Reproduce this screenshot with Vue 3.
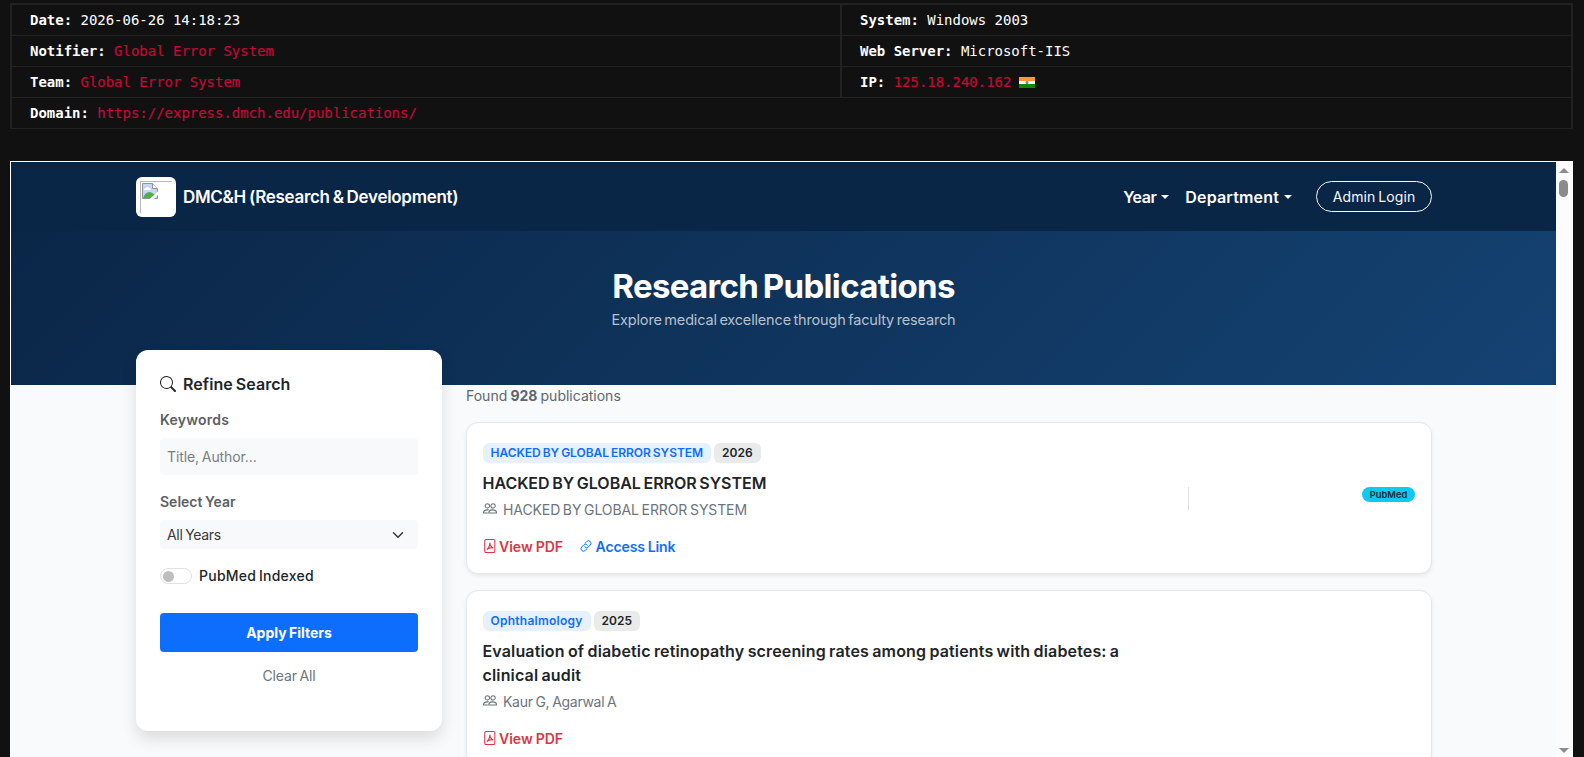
<script setup>
import { ref } from 'vue';

// Rows of the mirror info table
const rows = [
  [
    { label: 'Date:', value: '2026-06-26 14:18:23' },
    { label: 'System:', value: 'Windows 2003' },
  ],
  [
    { label: 'Notifier:', value: 'Global Error System', red: true },
    { label: 'Web Server:', value: 'Microsoft-IIS' },
  ],
  [
    { label: 'Team:', value: 'Global Error System', red: true },
    { label: 'IP:', value: '125.18.240.162', red: true, flag: true },
  ],
  [{ label: 'Domain:', value: 'https://express.dmch.edu/publications/', red: true }],
];

const publications = [
  {
    department: 'HACKED BY GLOBAL ERROR SYSTEM',
    year: 2026,
    title: 'HACKED BY GLOBAL ERROR SYSTEM',
    authors: 'HACKED BY GLOBAL ERROR SYSTEM',
    link: true,
    pubmed: true,
    caps: true,
  },
  {
    department: 'Ophthalmology',
    year: 2025,
    title: 'Evaluation of diabetic retinopathy screening rates among patients with diabetes: a clinical audit',
    authors: 'Kaur G, Agarwal A',
  },
];

const keywords = ref('');
const pubmedOnly = ref(false);

function clearAll() {
  keywords.value = '';
  pubmedOnly.value = false;
}
</script>

<template>
  <div class="screen">
    <div class="info">
      <div v-for="(row, i) in rows" :key="i" class="info-row">
        <div v-for="cell in row" :key="cell.label" class="info-cell">
          <b>{{ cell.label }}</b>&nbsp;<span :class="{ red: cell.red }">{{ cell.value }}</span>
          <svg v-if="cell.flag" class="flag" width="16" height="11" viewBox="0 0 16 11">
            <rect width="16" height="4" fill="#ff9933" />
            <rect y="4" width="16" height="3" fill="#fff" />
            <rect y="7" width="16" height="4" fill="#138808" />
            <circle cx="8" cy="5.5" r="1.5" fill="#7777bb" />
          </svg>
        </div>
      </div>
    </div>

    <div class="frame">
      <div class="page">
        <nav class="navbar">
          <div class="brand">
            <span class="logo">
              <svg width="32" height="32" viewBox="0 0 32 32">
                <path d="M.5 32V.5H32" fill="none" stroke="#b8b8b8" />
                <path d="M2.5 2.5h10l5 5v10h-15z" fill="#c5d7f6" stroke="#929292" />
                <path d="M12.5 2.5v5h5" fill="#fff" stroke="#929292" />
                <path d="M4 9q0-2 2-2 1-2 3 0 2 0 2 2z" fill="#fff" />
                <path d="M3 17q2-6 7-6 3 1 5 3l-3 3z" fill="#55ad3b" />
                <path d="M9 18.500 18.500 10v3.500l-5 5z" fill="#fff" />
              </svg>
            </span>
            <span class="brand-name">DMC&amp;H (Research &amp; Development)</span>
          </div>
          <div class="menu">
            <span class="menu-item year">Year</span><i class="caret"></i>
            <span class="menu-item dept">Department</span><i class="caret"></i>
            <button class="login"><span>Admin Login</span></button>
          </div>
        </nav>

        <header class="hero">
          <h1>Research Publications</h1>
          <p>Explore medical excellence through faculty research</p>
        </header>

        <main class="container">
          <aside class="filters">
            <h2>
              <svg width="16" height="16" viewBox="0 0 16 16" fill="currentColor">
                <path d="M11.742 10.344a6.500 6.500 0 1 0-1.397 1.398h-.001q.044.060.098.115l3.850 3.850a1 1 0 0 0 1.415-1.414l-3.850-3.850a1 1 0 0 0-.115-.1zM12 6.500a5.500 5.500 0 1 1-11 0 5.500 5.500 0 0 1 11 0" />
              </svg>
              <span>Refine Search</span>
            </h2>
            <label class="field-label kw">Keywords</label>
            <input v-model="keywords" class="keywords" type="text" placeholder="Title, Author..." />
            <label class="field-label sy">Select Year</label>
            <div class="select">
              <span>All Years</span>
              <svg width="12" height="12" viewBox="0 0 16 16">
                <path d="m2 5 6 6 6-6" fill="none" stroke="#343a40" stroke-width="2" stroke-linecap="round" stroke-linejoin="round" />
              </svg>
            </div>
            <div class="check" @click="pubmedOnly = !pubmedOnly">
              <span class="switch" :class="{ on: pubmedOnly }"></span>
              <span class="check-label">PubMed Indexed</span>
            </div>
            <button class="apply"><span>Apply Filters</span></button>
            <a class="clear" @click="clearAll"><span>Clear All</span></a>
          </aside>

          <section class="results">
            <p class="found">Found <b>928</b> publications</p>
            <article v-for="pub in publications" :key="pub.title" class="card" :class="{ caps: pub.caps }">
              <div class="card-main">
                <div class="badges">
                  <span class="badge blue">{{ pub.department }}</span>
                  <span class="badge grey">{{ pub.year }}</span>
                </div>
                <h3>{{ pub.title }}</h3>
                <div class="authors">
                  <svg width="14" height="14" viewBox="0 0 16 16" fill="none" stroke="currentColor" stroke-width="1.200">
                    <circle cx="5" cy="4.500" r="2.500" />
                    <circle cx="11.500" cy="4.500" r="2.500" />
                    <path d="M6.500 12.500h9c0-2.500-1.500-3.500-4.500-3.500s-4.500 1-4.500 3.500zM5.500 12.500h-5c0-2.500 1.500-3.500 4.500-3.500h1.500" />
                  </svg>
                  <span>{{ pub.authors }}</span>
                </div>
                <div class="links">
                  <a class="pdf">
                    <svg width="14" height="14" viewBox="0 0 16 16" fill="none" stroke="currentColor" stroke-width="1.200">
                      <rect x="2" y=".600" width="11.500" height="14.800" rx="1.500" />
                      <path d="M4.300 12c1.700-.9 3.700-4.700 3.500-8 .100 3.200 1.500 5.200 3.700 6-2.500-.5-4.700 0-7.200 2z" />
                    </svg>
                    <span>View PDF</span>
                  </a>
                  <a v-if="pub.link" class="access">
                    <svg width="12" height="12" viewBox="0 0 16 16" fill="none" stroke="currentColor" stroke-width="1.300">
                      <path d="M6.500 4.500 9 2a3.200 3.200 0 0 1 4.700 4.700L11 9.400a3.200 3.200 0 0 1-4.900-.6" />
                      <path d="M9.500 11.500 7 14a3.200 3.200 0 0 1-4.700-4.700L5 6.600a3.200 3.200 0 0 1 4.900.6" />
                    </svg>
                    <span>Access Link</span>
                  </a>
                </div>
              </div>
              <div v-if="pub.pubmed" class="card-side">
                <span class="pubmed">PubMed</span>
              </div>
            </article>
          </section>
        </main>
      </div>

      <div class="scrollbar">
        <i class="arrow up"></i>
        <i class="thumb"></i>
        <i class="arrow down"></i>
      </div>
    </div>
  </div>
</template>

<style>
body {
  background: #111;
  overflow: hidden;
}
</style>

<style scoped>
* {
  box-sizing: border-box;
}

.screen {
  height: 757px;
  padding: 3px 11px 0 10px;
  overflow: hidden;
  display: flex;
  flex-direction: column;
  background: #111;
  font-family: Inter, sans-serif;
}

h1, h2, h3, p {
  margin: 0;
}

button, input {
  font-family: inherit;
  border: none;
}

span {
  white-space: nowrap;
}

/* Info table */
.info {
  border: 2px solid #222;
  border-bottom: none;
  font-family: "DejaVu Sans Mono", monospace;
  font-size: 14px;
  letter-spacing: -0.02px;
  color: #fff;
}

.info-row {
  display: flex;
  height: 31px;
  border-bottom: 1px solid #222;
}

.info-cell {
  display: flex;
  align-items: center;
  flex: 1;
  padding-left: 18px;
}

.info-cell:first-child {
  flex: 0 0 828px;
}

.info-cell + .info-cell {
  border-left: 2px solid #222;
}

.red {
  color: #c20a35;
  -webkit-text-stroke: 0.2px #c20a35;
}

.flag {
  margin-left: 8px;
}

/* Embedded page */
.frame {
  display: flex;
  flex: 1;
  min-height: 0;
  margin-top: 32px;
  border-top: 1px solid #fff;
  border-left: 1px solid #fff;
  overflow: hidden;
}

.page {
  flex: 1;
  background: #f8fafc;
  overflow: hidden;
}

.navbar {
  display: flex;
  justify-content: space-between;
  align-items: center;
  height: 69px;
  padding: 0 124px 0 125px;
  background: #0a2647;
  color: #fff;
}

.brand,
.menu {
  display: flex;
  align-items: center;
}

.logo {
  display: flex;
  width: 40px;
  height: 40px;
  padding: 4px;
  margin-right: 7px;
  border-radius: 6px;
  background: #fff;
}

.brand-name {
  font-size: 17px;
  font-weight: 600;
  letter-spacing: -0.3px;
  word-spacing: -1px;
}

.menu-item {
  font-size: 16px;
  font-weight: 600;
}

.year {
  letter-spacing: -0.5px;
}

.dept {
  margin-left: 16px;
  letter-spacing: 0.18px;
}

.caret {
  margin-left: 5px;
  border: 4px solid transparent;
  border-top-color: #fff;
  border-bottom: none;
}

.login {
  width: 116px;
  height: 31px;
  padding: 0;
  margin-left: 24px;
  border: 1px solid #f8f9fa;
  border-radius: 16px;
  background: none;
  color: #f8f9fa;
  font-size: 14px;
  letter-spacing: 0.1px;
  word-spacing: -1.2px;
}

.hero {
  height: 154px;
  padding-top: 34px;
  background: linear-gradient(135deg, #0a2647 0%, #144272 100%);
  color: #fff;
  text-align: center;
}

.hero h1 {
  font-size: 33px;
  line-height: 42px;
  font-weight: 700;
  letter-spacing: -0.66px;
  word-spacing: -2.5px;
}

.hero p {
  font-size: 14.5px;
  line-height: 26px;
  letter-spacing: -0.17px;
  word-spacing: -1.3px;
  color: #b6c1cd;
}

.container {
  display: flex;
  gap: 24px;
  padding: 0 124px 0 125px;
}

.filters {
  flex: 0 0 306px;
  position: relative;
  height: 381px;
  margin-top: -35px;
  padding: 24px;
  border-radius: 12px;
  background: #fff;
  box-shadow: 0 8px 16px rgba(0, 0, 0, 0.12);
  display: flex;
  flex-direction: column;
}

.filters h2 {
  display: flex;
  align-items: center;
  gap: 7px;
  height: 20px;
  font-size: 16px;
  font-weight: 600;
  letter-spacing: 0.05px;
  word-spacing: -1px;
  color: #212529;
}

.field-label {
  height: 18px;
  line-height: 18px;
  font-size: 14px;
  font-weight: 600;
  word-spacing: -1px;
  color: #5b6065;
}

.kw {
  margin-top: 17px;
  letter-spacing: 0.25px;
}

.sy {
  margin-top: 18px;
}

.keywords {
  height: 37px;
  margin-top: 9px;
  padding: 0 7px;
  border-radius: 4px;
  background: #f8f9fa;
  font-size: 14px;
  letter-spacing: -0.1px;
  word-spacing: -1px;
}

.keywords::placeholder {
  color: #7a7e82;
}

.select {
  display: flex;
  justify-content: space-between;
  align-items: center;
  height: 29px;
  margin-top: 9px;
  padding: 0 14px 0 7px;
  border-radius: 4px;
  background: #f8f9fa;
  font-size: 14px;
  letter-spacing: -0.3px;
  word-spacing: -1px;
  color: #343a40;
}

.check {
  display: flex;
  align-items: center;
  height: 18px;
  margin-top: 18px;
}

.switch {
  display: flex;
  align-items: center;
  width: 32px;
  height: 16px;
  padding: 0 2px;
  margin-right: 7px;
  border: 1px solid #dee2e6;
  border-radius: 8px;
}

.switch::before {
  content: "";
  width: 11px;
  height: 11px;
  border-radius: 50%;
  background: #bfbfbf;
}

.switch.on {
  justify-content: flex-end;
}

.check-label {
  margin-bottom: 2px;
  font-size: 14px;
  font-weight: 500;
  letter-spacing: 0.25px;
  word-spacing: -1.3px;
  color: #212529;
}

.apply {
  height: 39px;
  margin-top: 28px;
  border-radius: 4px;
  background: #0d6efd;
  color: #fff;
  font-size: 14px;
  font-weight: 700;
  word-spacing: -1px;
}

.clear {
  margin-top: 15px;
  text-align: center;
  font-size: 14px;
  line-height: 18px;
  letter-spacing: -0.15px;
  word-spacing: -1.2px;
  color: #6c757d;
}

.results {
  flex: 1;
}

.found {
  height: 37px;
  line-height: 22px;
  font-size: 14px;
  word-spacing: -0.8px;
  color: #5f666d;
}

.card {
  display: flex;
  align-items: center;
  margin-bottom: 16px;
  padding: 0 16px 0 15.500px;
  border: 1px solid #e2e8f0;
  border-radius: 12px;
  background: #fff;
  box-shadow: 0 2px 4px rgba(0, 0, 0, 0.075);
}

.card-main {
  flex: 0 0 705.5px;
  padding: 20px 12px 16px 0;
}

.badges {
  display: flex;
  gap: 3px;
}

.badge {
  height: 20px;
  padding: 0 8px;
  border-radius: 6px;
  font-size: 12px;
  line-height: 20px;
  font-weight: 600;
}

.blue {
  background: #e7f0ff;
  color: #0d6efd;
  letter-spacing: 0.25px;
}

.grey {
  background: #e9ebeb;
  color: #212529;
}

.card h3 {
  margin-top: 8px;
  font-size: 16px;
  line-height: 24px;
  font-weight: 600;
  letter-spacing: 0.15px;
  word-spacing: -0.9px;
  color: #212529;
}

.authors {
  display: flex;
  align-items: center;
  gap: 6.5px;
  height: 22px;
  margin-top: 3px;
  font-size: 14px;
  letter-spacing: -0.3px;
  word-spacing: -0.8px;
  color: #6c757d;
}

.caps .blue {
  letter-spacing: -0.03px;
  word-spacing: -1px;
}

.caps h3 {
  letter-spacing: -0.03px;
  word-spacing: -1.3px;
}

.caps .authors {
  letter-spacing: -0.1px;
  word-spacing: -1.1px;
}

.links {
  display: flex;
  gap: 17px;
  height: 22px;
  margin-top: 15px;
  font-size: 14px;
  font-weight: 600;
  word-spacing: -0.5px;
}

.links a {
  display: flex;
  align-items: center;
  gap: 2.5px;
}

.links .access {
  gap: 3.5px;
  letter-spacing: -0.12px;
}

.pdf {
  color: #dc3545;
}

.access {
  color: #0d6efd;
}

.card-side {
  display: flex;
  justify-content: flex-end;
  align-items: flex-start;
  flex: 1;
  height: 23px;
  border-left: 1px solid #dee2e6;
}

.pubmed {
  width: 53px;
  height: 15px;
  border-radius: 8px;
  background: #0dcaf0;
  color: #212529;
  font-size: 9.3px;
  line-height: 15px;
  font-weight: 600;
  text-align: center;
}

/* Scrollbar */
.scrollbar {
  display: flex;
  flex-direction: column;
  align-items: center;
  flex: 0 0 17px;
  padding: 6px 2px 4px 0;
  background: #fcfcfc;
}

.arrow {
  border: 5px solid transparent;
}

.up {
  border-top: none;
  border-bottom-color: #8b8b8b;
}

.down {
  margin-top: auto;
  border-bottom: none;
  border-top-color: #8b8b8b;
}

.thumb {
  width: 9px;
  height: 17px;
  margin-top: 7px;
  border-radius: 5px;
  background: #8b8b8b;
}
</style>
